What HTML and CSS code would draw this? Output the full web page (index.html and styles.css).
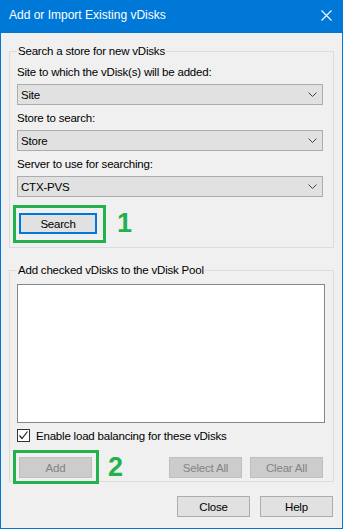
FILE: index.html
```html
<!DOCTYPE html>
<html lang="en">
<head>
    <meta charset="UTF-8">
    <title>Add or Import Existing vDisks</title>
    <link rel="stylesheet" href="styles.css">
</head>
<body>
    <div class="window">
        <div class="title-bar">
            <div class="title">Add or Import Existing vDisks</div>
            <svg class="close-x" width="11" height="11" viewBox="0 0 11 11">
                <path d="M0.5 0.5 L10.5 10.5 M10.5 0.5 L0.5 10.5" stroke="#fff" stroke-width="1.1" fill="none"/>
            </svg>
        </div>

        <fieldset class="group group-search">
            <legend>Search a store for new vDisks</legend>

            <div class="field-label">Site to which the vDisk(s) will be added:</div>
            <div class="combo">
                <span>Site</span>
                <svg class="chevron" width="9" height="5" viewBox="0 0 9 5"><path d="M0.5 0.5 L4.5 4.5 L8.5 0.5" stroke="#444" fill="none"/></svg>
            </div>

            <div class="field-label">Store to search:</div>
            <div class="combo">
                <span>Store</span>
                <svg class="chevron" width="9" height="5" viewBox="0 0 9 5"><path d="M0.5 0.5 L4.5 4.5 L8.5 0.5" stroke="#444" fill="none"/></svg>
            </div>

            <div class="field-label">Server to use for searching:</div>
            <div class="combo">
                <span>CTX-PVS</span>
                <svg class="chevron" width="9" height="5" viewBox="0 0 9 5"><path d="M0.5 0.5 L4.5 4.5 L8.5 0.5" stroke="#444" fill="none"/></svg>
            </div>

            <div class="search-row">
                <span class="callout callout-search">
                    <button class="btn btn-default search-btn">Search</button>
                </span>
                <span class="step step-one">1</span>
            </div>
        </fieldset>

        <fieldset class="group group-pool">
            <legend>Add checked vDisks to the vDisk Pool</legend>

            <div class="list-box"></div>

            <label class="check-row">
                <span class="check-box">
                    <svg width="11" height="11" viewBox="0 0 11 11"><path d="M1.5 5.5 L4 8.5 L9.5 1.5" stroke="#222" stroke-width="1.2" fill="none"/></svg>
                </span>
                Enable load balancing for these vDisks
            </label>

            <div class="pool-buttons">
                <div class="add-wrap">
                    <span class="callout callout-add">
                        <button class="btn btn-disabled add-btn" disabled>Add</button>
                    </span>
                    <span class="step step-two">2</span>
                </div>
                <div class="select-buttons">
                    <button class="btn btn-disabled" disabled>Select All</button>
                    <button class="btn btn-disabled" disabled>Clear All</button>
                </div>
            </div>
        </fieldset>

        <div class="footer">
            <button class="btn">Close</button>
            <button class="btn">Help</button>
        </div>
    </div>
</body>
</html>
```

FILE: styles.css
```css
body {
    margin: 0;
    font-family: 'Liberation Sans', Arial, sans-serif;
    color: #000;
    background: #fff;
}
.window {
    width: 343px;
    height: 529px;
    box-sizing: border-box;
    border: 1px solid #0078d7;
    border-top: none;
    background: #f0f0f0;
    display: flex;
    flex-direction: column;
    font-size: 11.5px;
    letter-spacing: -0.2px;
}
.title-bar {
    height: 31px;
    margin: 0 -1px;
    background: #0078d7;
    color: #fff;
    display: flex;
    align-items: center;
    justify-content: space-between;
    padding: 0 11px 2px 9px;
    flex-shrink: 0;
}
.title {
    font-size: 12px;
    line-height: 15px;
    letter-spacing: 0;
}
.close-x {
    display: block;
}

.group {
    margin: 0 8px;
    padding: 6px 10px 0 7px;
    border: 1px solid #dcdcdc;
    min-width: 0;
}
.group legend {
    padding: 0 1px;
    line-height: 15px;
}
.group-search {
    margin-top: 11px;
    padding-bottom: 13px;
}
.group-pool {
    margin-top: 15px;
    padding-bottom: 3px;
}

.field-label {
    line-height: 15px;
    margin-bottom: 4px;
}
.combo + .field-label {
    margin-top: 6px;
}
.combo {
    height: 21px;
    box-sizing: border-box;
    border: 1px solid #adadad;
    background: #e1e1e1;
    display: flex;
    align-items: center;
    justify-content: space-between;
    padding: 0 5px 0 3px;
}
.chevron {
    display: block;
}

.btn {
    font-family: inherit;
    font-size: 11.5px;
    letter-spacing: -0.2px;
    width: 73px;
    height: 21px;
    box-sizing: border-box;
    padding: 0;
    border: 1px solid #adadad;
    background: #e1e1e1;
    color: #000;
}
.btn-default {
    border: 2px solid #0078d7;
}
.btn-disabled {
    border-color: #bfbfbf;
    background: #cccccc;
    color: #838383;
}
.search-btn {
    width: 78px;
    display: block;
}
.add-btn {
    display: block;
}

/* green annotation frames drawn around the buttons */
.callout {
    display: block;
    border: 3px solid #22b14c;
}
.callout-search {
    padding: 5px 6px 6px 3px;
    margin: -8px -9px -9px -5px;
}
.callout-add {
    padding: 4px 4px 3px 3px;
    margin: -7px -7px -6px -5px;
}
.step {
    color: #22b14c;
    font-weight: bold;
    font-size: 27px;
    line-height: 21px;
    letter-spacing: 0;
}

.search-row {
    display: flex;
    align-items: center;
    margin-top: 16px;
    margin-left: 1px;
}
.step-one {
    margin-left: 20px;
}

.list-box {
    height: 139px;
    margin-right: -2px;
    box-sizing: border-box;
    border: 1px solid #828790;
    background: #fff;
}
.check-row {
    display: flex;
    align-items: center;
    height: 15px;
    margin-top: 5px;
}
.check-box {
    width: 13px;
    height: 13px;
    box-sizing: border-box;
    border: 1px solid #333;
    background: #fff;
    margin-right: 6px;
    display: flex;
    align-items: center;
    justify-content: center;
}
.check-box svg {
    display: block;
}

.pool-buttons {
    display: flex;
    justify-content: space-between;
    align-items: center;
    margin-top: 14px;
}
.add-wrap {
    display: flex;
    align-items: center;
    margin-left: 1px;
}
.step-two {
    margin-left: 16px;
}
.select-buttons {
    display: flex;
    gap: 8px;
}

.footer {
    display: flex;
    justify-content: flex-end;
    gap: 10px;
    padding: 14px 9px 0 0;
}
```
